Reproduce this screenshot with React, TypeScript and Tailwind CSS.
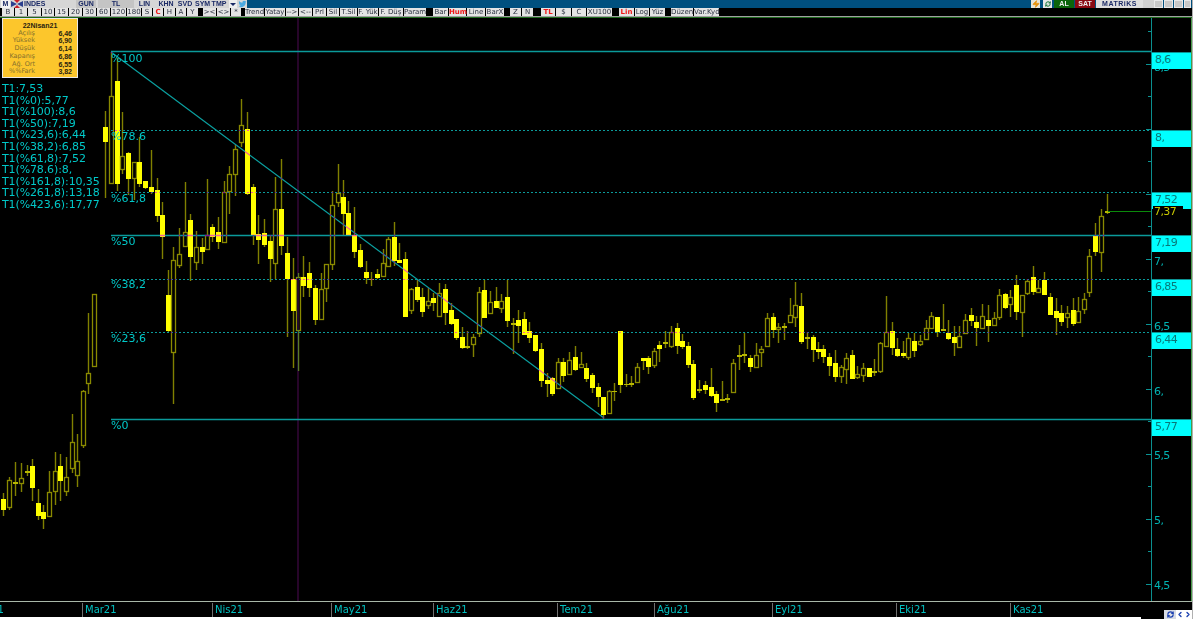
import { FaTwitter } from 'react-icons/fa'
import { Zap, ChevronLeft, ChevronRight, RefreshCw } from 'lucide-react'

// x, wick top, body top, body bottom, wick bottom, kind (0 hollow, 1 filled, 2 doji)
const candles: number[][] = [
  [3, 493, 499, 510, 516, 1], [9, 477, 480, 507, 510, 0], [15, 462, 482, 484, 496, 2], [21, 463, 478, 483, 492, 0],
  [27, 465, 471, 473, 476, 2], [32, 459, 466, 488, 501, 1], [38, 489, 503, 516, 520, 1], [43, 505, 512, 519, 529, 1],
  [49, 471, 492, 516, 517, 0], [55, 452, 471, 491, 505, 0], [60, 454, 466, 481, 501, 1], [66, 457, 477, 491, 496, 0],
  [72, 414, 442, 468, 473, 0], [77, 434, 461, 475, 487, 0], [83, 390, 391, 445, 448, 0], [88, 313, 373, 383, 394, 0],
  [94, 294, 294, 366, 367, 0], [105, 111, 127, 142, 198, 1], [111, 52, 96, 183, 183, 0], [117, 58, 81, 184, 191, 1],
  [122, 112, 156, 169, 174, 0], [128, 152, 153, 179, 195, 1], [134, 162, 162, 178, 200, 0], [139, 137, 162, 184, 187, 1],
  [145, 181, 181, 188, 189, 1], [151, 150, 187, 192, 194, 1], [157, 178, 190, 216, 222, 1], [162, 202, 215, 237, 259, 1],
  [168, 270, 295, 331, 332, 1], [173, 247, 260, 352, 404, 0], [179, 228, 254, 265, 268, 0], [185, 182, 232, 246, 247, 0],
  [190, 214, 220, 257, 281, 1], [196, 231, 247, 262, 270, 0], [202, 238, 247, 252, 264, 1], [207, 179, 235, 249, 250, 0],
  [212, 224, 227, 237, 242, 1], [218, 217, 232, 242, 249, 1], [224, 181, 192, 242, 243, 0], [229, 166, 174, 191, 214, 0],
  [235, 145, 149, 174, 196, 0], [241, 99, 125, 142, 147, 0], [247, 112, 129, 194, 195, 1], [253, 184, 187, 235, 245, 1],
  [258, 215, 234, 240, 264, 1], [264, 219, 233, 245, 247, 1], [270, 235, 241, 259, 282, 1], [275, 177, 209, 263, 279, 0],
  [281, 159, 209, 246, 255, 1], [287, 237, 253, 279, 337, 1], [293, 258, 279, 311, 368, 1], [298, 273, 277, 330, 371, 0],
  [303, 256, 277, 286, 297, 1], [309, 262, 273, 288, 297, 1], [315, 285, 288, 320, 325, 1], [321, 273, 289, 319, 320, 0],
  [326, 264, 264, 288, 302, 0], [332, 191, 205, 264, 270, 0], [338, 164, 193, 202, 207, 0], [343, 180, 197, 214, 235, 1],
  [348, 201, 213, 235, 235, 1], [354, 207, 235, 252, 258, 1], [360, 244, 250, 267, 268, 1], [366, 261, 272, 278, 284, 1],
  [371, 272, 279, 280, 286, 2], [377, 269, 274, 278, 279, 1], [383, 249, 263, 276, 276, 0], [388, 237, 239, 266, 267, 0],
  [394, 222, 237, 261, 266, 1], [399, 243, 260, 263, 263, 1], [405, 252, 259, 317, 317, 1], [411, 288, 289, 310, 314, 0],
  [417, 280, 287, 300, 302, 1], [422, 288, 297, 312, 317, 1], [428, 288, 301, 305, 309, 0], [433, 293, 298, 303, 311, 1],
  [439, 283, 293, 316, 317, 0], [445, 284, 289, 313, 325, 1], [451, 303, 310, 324, 325, 1], [456, 319, 319, 338, 340, 1],
  [462, 327, 337, 348, 349, 1], [467, 331, 346, 348, 349, 2], [473, 334, 337, 344, 357, 0], [479, 287, 292, 333, 337, 0],
  [484, 280, 290, 318, 318, 1], [490, 291, 302, 313, 314, 0], [496, 287, 301, 308, 308, 1], [501, 294, 301, 308, 313, 0],
  [507, 280, 297, 321, 327, 1], [513, 318, 323, 325, 354, 2], [518, 310, 320, 326, 343, 1], [524, 312, 319, 335, 335, 1],
  [529, 322, 331, 338, 343, 1], [535, 335, 335, 351, 352, 1], [541, 343, 349, 381, 387, 1], [547, 373, 380, 384, 397, 1],
  [552, 377, 378, 394, 396, 1], [558, 358, 362, 388, 389, 0], [563, 358, 362, 376, 382, 1], [569, 352, 360, 374, 375, 0],
  [575, 346, 357, 370, 371, 1], [581, 352, 364, 367, 368, 0], [586, 363, 368, 379, 382, 1], [592, 373, 375, 388, 393, 1],
  [598, 383, 387, 397, 407, 1], [603, 397, 397, 415, 419, 1], [609, 390, 391, 413, 413, 0], [614, 383, 391, 392, 401, 2],
  [620, 331, 331, 385, 393, 1], [626, 374, 384, 385, 387, 2], [631, 376, 383, 385, 387, 2], [637, 363, 367, 382, 383, 0],
  [643, 358, 358, 361, 370, 1], [648, 356, 358, 367, 374, 1], [654, 348, 351, 365, 368, 0], [659, 341, 345, 349, 362, 1],
  [665, 331, 342, 344, 348, 2], [671, 326, 332, 346, 348, 0], [677, 323, 328, 346, 354, 1], [682, 334, 341, 347, 349, 1],
  [688, 342, 346, 365, 368, 1], [693, 360, 364, 398, 400, 1], [699, 380, 389, 391, 393, 2], [705, 381, 385, 390, 394, 1],
  [711, 368, 387, 396, 397, 1], [716, 391, 394, 403, 412, 1], [722, 381, 399, 401, 401, 2], [727, 394, 398, 400, 403, 2],
  [733, 359, 363, 392, 393, 0], [739, 345, 355, 357, 370, 2], [744, 333, 354, 356, 363, 2], [750, 355, 358, 367, 372, 1],
  [756, 343, 355, 367, 368, 0], [761, 346, 349, 352, 367, 0], [767, 313, 318, 346, 346, 0], [773, 313, 317, 330, 338, 1],
  [778, 323, 327, 329, 343, 0], [784, 323, 326, 328, 340, 2], [790, 298, 315, 322, 322, 0], [795, 282, 305, 317, 327, 0],
  [801, 293, 306, 342, 344, 1], [807, 332, 337, 339, 349, 2], [813, 335, 337, 350, 362, 1], [818, 342, 349, 352, 359, 1],
  [823, 345, 349, 357, 363, 1], [829, 353, 357, 366, 376, 1], [835, 350, 363, 377, 382, 1], [841, 365, 367, 376, 383, 0],
  [846, 353, 358, 369, 384, 0], [852, 350, 355, 379, 379, 1], [857, 366, 374, 377, 379, 0], [863, 363, 368, 375, 382, 0],
  [869, 368, 368, 377, 377, 1], [874, 359, 371, 373, 376, 2], [880, 342, 343, 371, 373, 0], [886, 296, 332, 346, 346, 0],
  [892, 322, 331, 348, 355, 1], [897, 338, 349, 356, 357, 1], [903, 341, 353, 356, 358, 1], [908, 333, 338, 357, 360, 0],
  [914, 333, 341, 351, 357, 1], [920, 335, 341, 344, 346, 0], [926, 320, 328, 339, 340, 0], [931, 312, 316, 328, 329, 0],
  [937, 317, 317, 332, 337, 1], [943, 304, 329, 331, 331, 2], [948, 320, 333, 339, 340, 1], [954, 326, 337, 343, 356, 1],
  [959, 326, 336, 347, 347, 0], [965, 314, 320, 333, 334, 0], [971, 308, 315, 321, 326, 1], [976, 316, 322, 328, 346, 1],
  [982, 304, 316, 328, 328, 0], [988, 305, 320, 326, 342, 1], [994, 312, 318, 325, 325, 0], [999, 289, 295, 317, 320, 0],
  [1005, 293, 294, 308, 309, 1], [1010, 290, 297, 304, 317, 0], [1016, 275, 285, 312, 320, 1], [1022, 295, 295, 312, 337, 0],
  [1027, 279, 281, 293, 295, 0], [1033, 266, 277, 292, 295, 1], [1038, 280, 288, 292, 292, 0], [1044, 272, 280, 295, 295, 1],
  [1050, 293, 297, 315, 315, 1], [1056, 298, 311, 318, 335, 1], [1061, 305, 313, 322, 326, 1], [1067, 306, 313, 317, 328, 0],
  [1073, 298, 310, 324, 326, 1], [1078, 297, 311, 322, 322, 0], [1084, 293, 299, 309, 314, 0], [1089, 249, 256, 292, 297, 0],
  [1095, 223, 236, 252, 256, 1], [1101, 209, 216, 252, 272, 0], [1107, 194, 211, 213, 214, 2],
]

const fibLines = [
  { y: 51.5, dash: '', w: 1.6 },
  { y: 130.5, dash: '2 2', w: 1 },
  { y: 192.5, dash: '2 2', w: 1 },
  { y: 235.5, dash: '', w: 1.6 },
  { y: 279.5, dash: '2 2', w: 1 },
  { y: 332.5, dash: '2 2', w: 1 },
  { y: 419.5, dash: '', w: 1.6 },
]

const axisTicks = [31.5, 64.5, 96.5, 129.5, 161.5, 194.5, 226.5, 259.5, 291.5, 324.5, 356.5, 389.5, 421.5, 454.5, 486.5, 519.5, 551.5, 584.5]

const fibLabels = [
  { text: '%100', cls: 'top-[34px]' },
  { text: '%78.6', cls: 'top-[112px]' },
  { text: '%61,8', cls: 'top-[174px]' },
  { text: '%50', cls: 'top-[217px]' },
  { text: '%38,2', cls: 'top-[260px]' },
  { text: '%23,6', cls: 'top-[314px]' },
  { text: '%0', cls: 'top-[401px]' },
]

const legend = [
  'T1:7,53', 'T1(%0):5,77', 'T1(%100):8,6', 'T1(%50):7,19', 'T1(%23,6):6,44', 'T1(%38,2):6,85',
  'T1(%61,8):7,52', 'T1(%78.6):8,', 'T1(%161,8):10,35', 'T1(%261,8):13,18', 'T1(%423,6):17,77',
]

const info = [
  ['Açılış', '6,46'], ['Yüksek', '6,90'], ['Düşük', '6,14'], ['Kapanış', '6,86'], ['Ağ. Ort', '6,55'], ['%%Fark', '3,82'],
]

const badges = [
  { text: '8,6', cls: 'top-[34px]' },
  { text: '8,', cls: 'top-[112px]' },
  { text: '7,52', cls: 'top-[174px]' },
  { text: '7,19', cls: 'top-[217px]' },
  { text: '6,85', cls: 'top-[261px]' },
  { text: '6,44', cls: 'top-[314px]' },
  { text: '5,77', cls: 'top-[401px]' },
]

const plainPrices = [
  { text: '8,5', cls: 'top-[43px]' },
  { text: '7,', cls: 'top-[237px]' },
  { text: '6,5', cls: 'top-[302px]' },
  { text: '6,', cls: 'top-[367px]' },
  { text: '5,5', cls: 'top-[431px]' },
  { text: '5,', cls: 'top-[496px]' },
  { text: '4,5', cls: 'top-[561px]' },
]

const months = [
  { text: 'Şub21', cls: 'left-[-31px]' },
  { text: 'Mar21', cls: 'left-[82px]' },
  { text: 'Nis21', cls: 'left-[212px]' },
  { text: 'May21', cls: 'left-[331px]' },
  { text: 'Haz21', cls: 'left-[433px]' },
  { text: 'Tem21', cls: 'left-[557px]' },
  { text: 'Ağu21', cls: 'left-[654px]' },
  { text: 'Eyl21', cls: 'left-[772px]' },
  { text: 'Eki21', cls: 'left-[896px]' },
  { text: 'Kas21', cls: 'left-[1010px]' },
]

type Btn = { t?: string; w: string; red?: boolean }

const toolbar: Btn[] = [
  { t: 'B', w: 'w-[12px]' }, { t: '1', w: 'w-[12px]' }, { t: '5', w: 'w-[13px]' }, { t: '10', w: 'w-[12px]' },
  { t: '15', w: 'w-[13px]' }, { t: '20', w: 'w-[13px]' }, { t: '30', w: 'w-[13px]' }, { t: '60', w: 'w-[13px]' },
  { t: '120', w: 'w-[15px]' }, { t: '180', w: 'w-[14px]' }, { t: 'S', w: 'w-[10px]' }, { t: 'C', w: 'w-[10px]', red: true },
  { t: 'H', w: 'w-[11px]' }, { t: 'A', w: 'w-[10px]' }, { t: 'Y', w: 'w-[11px]' }, { w: 'w-[3px]' },
  { t: '><', w: 'w-[13px]' }, { t: '<>', w: 'w-[13px]' }, { t: '*', w: 'w-[10px]' }, { w: 'w-[2px]' },
  { t: 'Trend', w: 'w-[19px]' }, { t: 'Yatay', w: 'w-[20px]' }, { t: '-->', w: 'w-[12px]' }, { t: '<--', w: 'w-[13px]' },
  { t: 'Prl', w: 'w-[13px]' }, { t: 'Sil', w: 'w-[12px]' }, { t: 'T.Sil', w: 'w-[17px]' }, { t: 'F. Yük', w: 'w-[20px]' },
  { t: 'F. Düş', w: 'w-[24px]' }, { t: 'Param', w: 'w-[22px]' }, { w: 'w-[5px]' },
  { t: 'Bar', w: 'w-[15px]' }, { t: 'Hum', w: 'w-[17px]', red: true }, { t: 'Line', w: 'w-[18px]' }, { t: 'BarX', w: 'w-[18px]' }, { w: 'w-[4px]' },
  { t: 'Z', w: 'w-[11px]' }, { t: 'N', w: 'w-[11px]' }, { w: 'w-[6px]' },
  { t: 'TL', w: 'w-[14px]', red: true }, { t: '$', w: 'w-[15px]' }, { t: 'C', w: 'w-[14px]' }, { t: 'XU100', w: 'w-[25px]' }, { w: 'w-[5px]' },
  { t: 'Lin', w: 'w-[15px]', red: true }, { t: 'Log', w: 'w-[14px]' }, { t: 'Yüz', w: 'w-[15px]' }, { w: 'w-[4px]' },
  { t: 'Düzen', w: 'w-[22px]' }, { t: 'Var.Kyd', w: 'w-[25px]' },
]

function Candle({ c }: { c: number[] }) {
  const [x, wt, bt, bb, wb, kind] = c
  return (
    <g>
      <line x1={x + 0.5} x2={x + 0.5} y1={wt} y2={wb} stroke="#808000" strokeWidth={1.4} />
      {kind === 0 && <rect x={x - 1.5} y={bt + 0.5} width={4} height={bb - bt} fill="#000" stroke="#8a8a00" strokeWidth={1.3} />}
      {kind === 1 && <rect x={x - 2} y={bt} width={5} height={bb - bt} fill="#ffff00" />}
      {kind === 2 && <rect x={x - 2} y={bt} width={5} height={Math.max(bb - bt, 1)} fill="#b8b800" />}
    </g>
  )
}

function TopBar() {
  return (
    <div className="flex h-[8px] bg-[#00507f] overflow-hidden font-['Liberation_Sans',sans-serif] text-[7px] font-bold leading-[8px] text-[#1b2a66]">
      <div className="flex items-center w-[247px] bg-[#d6d6d6]">
        <span className="w-[9px] ml-[1px] bg-[#f2f2f2] text-center">M</span>
        <svg viewBox="0 0 12 8" className="w-[12px] h-[8px] ml-[1px]">
          <path d="M0 1 L6 4 L12 1 V7 L6 4 L0 7 Z" fill="#2b3f8f" />
          <path d="M3 0 L6 3 L9 0 Z" fill="#c8202a" />
          <path d="M3 8 L6 5 L9 8 Z" fill="#c8202a" />
        </svg>
        <span className="w-[52px] ml-[1px]">INDES</span>
        <span className="w-[20px] bg-[#c4c4c4] text-center">GUN</span>
        <span className="w-[36px] ml-[2px] bg-[#c4c4c4] text-center">TL</span>
        <span className="w-[19px] ml-[1px] text-center">LIN</span>
        <span className="w-[18px] ml-[3px] text-center">KHN</span>
        <span className="w-[16px] ml-[2px] text-center">SVD</span>
        <span className="w-[15px] ml-[2px] text-center">SYM</span>
        <span className="w-[16px] ml-[1px] text-center">TMP</span>
        <svg viewBox="0 0 8 8" className="w-[8px] h-[8px] ml-[2px] bg-[#eeeeee]">
          <path d="M1 3 H7 L4 6 Z" fill="#1b2a66" />
        </svg>
        <FaTwitter className="w-[9px] h-[8px] ml-[1px] text-[#4aa8e0]" />
      </div>
      <div className="flex items-center ml-auto mr-[1px]">
        <span className="flex justify-center w-[9px] h-[8px] bg-[#e8e4d8]">
          <Zap className="w-[8px] h-[8px] text-[#e8920c] fill-[#e8920c]" />
        </span>
        <span className="flex justify-center items-center w-[9px] h-[8px] ml-[3px] bg-[#e8e8e8]">
          <RefreshCw className="w-[6px] h-[6px] text-[#1a7a3a]" strokeWidth={4} />
        </span>
        <span className="w-[20px] ml-[2px] bg-[#0b640b] text-center text-[#f0f0f0]">AL</span>
        <span className="w-[20px] ml-[1px] bg-[#8a0a12] text-center text-[#f0f0f0]">SAT</span>
        <span className="w-[47px] ml-[1px] bg-[#dedede] text-center tracking-[0.5px]">MATRiKS</span>
        <span className="w-[11px] h-[8px] bg-[#d0d0d0]" />
        <span className="w-[9px] h-[8px] bg-[#c8c8c8] border border-[#e8e8e8]" />
        <span className="w-[9px] h-[8px] ml-[1px] bg-[#c8c8c8] border border-[#e8e8e8]" />
        <span className="w-[9px] h-[8px] ml-[1px] bg-[#c8c8c8] border border-[#e8e8e8]" />
        <span className="w-[7px] h-[8px] ml-[1px] bg-[#c8c8c8] border border-[#e8e8e8]" />
      </div>
    </div>
  )
}

function Toolbar() {
  return (
    <div className="flex gap-px h-[8px] pl-[2px] bg-black overflow-hidden font-['DejaVu_Sans',sans-serif] text-[7px] leading-[8px] whitespace-nowrap">
      {toolbar.map((b, i) =>
        b.t ? (
          <span key={i} className={`${b.w} shrink-0 text-center bg-[#e4e4e4] ${b.red ? 'text-[#f01818] font-bold' : 'text-[#2a3040]'}`}>
            {b.t}
          </span>
        ) : (
          <span key={i} className={`${b.w} shrink-0`} />
        ),
      )}
    </div>
  )
}

function InfoPanel() {
  return (
    <div className="absolute left-[2px] top-[0px] w-[76px] h-[60px] px-[5px] pt-[3px] bg-[#fcc62c] border border-[#e8e8e8] font-['Liberation_Sans',sans-serif] text-[7px] leading-[7.7px]">
      <div className="text-center font-bold text-[#2a2410]">22Nisan21</div>
      {info.map(([label, value]) => (
        <div key={label} className="flex">
          <span className="w-[27px] text-right text-[#84702c] font-['DejaVu_Sans',sans-serif] text-[6.5px]">{label}</span>
          <span className="ml-auto font-bold text-[#2a2410]">{value}</span>
        </div>
      ))}
    </div>
  )
}

function Chart() {
  return (
    <div className="relative w-[1152px] h-[583px] font-['DejaVu_Sans',sans-serif] text-[11px] text-[#00c8c8]">
      <svg viewBox="0 18 1152 583" className="absolute inset-0 w-[1152px] h-[583px]">
        {candles.map(c => (
          <Candle key={c[0]} c={c} />
        ))}
        <g className="mix-blend-difference">
          <line x1={298} x2={298} y1={18} y2={601} stroke="#38083c" strokeWidth={1.4} />
          {fibLines.map(l => (
            <line key={l.y} x1={111} x2={1152} y1={l.y} y2={l.y} stroke="#0b9a9a" strokeWidth={l.w} strokeDasharray={l.dash} />
          ))}
          <line x1={111} y1={52} x2={604} y2={418} stroke="#0ba0a0" strokeWidth={1.2} />
        </g>
        <line x1={1108} x2={1152} y1={211.5} y2={211.5} stroke="#0a8a0a" />
      </svg>
      <div className="absolute left-[2px] top-[65px] leading-[11.6px] tracking-[-0.12px] whitespace-nowrap">
        {legend.map(t => (
          <div key={t}>{t}</div>
        ))}
      </div>
      {fibLabels.map(l => (
        <span key={l.text} className={`absolute left-[111px] leading-[13px] ${l.cls}`}>
          {l.text}
        </span>
      ))}
      <InfoPanel />
    </div>
  )
}

function PriceAxis() {
  return (
    <div className="relative w-[40px] h-[583px] border-l border-[#0b8f8f] font-['DejaVu_Sans',sans-serif] text-[11px] tracking-[-0.6px] leading-[13px]">
      <svg viewBox="0 18 6 583" className="absolute left-[-7px] top-0 w-[6px] h-[583px]">
        {axisTicks.map((y, i) => (
          <line key={y} x1={i % 2 === 0 ? 3 : 1} x2={6} y1={y} y2={y} stroke="#0b9494" />
        ))}
      </svg>
      {plainPrices.map(p => (
        <span key={p.text} className={`absolute left-[2px] text-[#00b4b4] ${p.cls}`}>
          {p.text}
        </span>
      ))}
      {badges.map(b => (
        <div key={b.text} className={`absolute left-0 w-[39px] h-[17px] pl-[3px] bg-[#00ffff] border-t border-[#0b9494] text-[#087878] ${b.cls}`}>
          {b.text}
        </div>
      ))}
      <div className="absolute left-[1px] top-[188px] w-[30px] h-[11px] pl-[1px] bg-black text-[#c8c800] leading-[11px]">7,37</div>
    </div>
  )
}

function TimeAxis() {
  return (
    <div className="relative h-[18px] bg-black border-t border-[#a8b8a8] font-['DejaVu_Sans',sans-serif] text-[10px] leading-[14px] text-[#00c0c0]">
      {months.map(m => (
        <span key={m.text} className={`absolute top-[1px] pl-[2px] border-l border-[#707070] ${m.cls}`}>
          {m.text}
        </span>
      ))}
      <div className="absolute left-0 bottom-0 w-[1141px] h-[2px] bg-white" />
      <div className="absolute right-0 bottom-0 flex items-center h-[9px]">
        <span className="flex items-center justify-center w-[12px] h-[9px] bg-[#d8dce4]">
          <RefreshCw className="w-[7px] h-[7px] text-[#1a3fb0]" strokeWidth={4} />
        </span>
        <ChevronLeft className="w-[8px] h-[9px] bg-white text-[#1a3fb0]" strokeWidth={4} />
        <ChevronRight className="w-[8px] h-[9px] bg-white text-[#1a3fb0]" strokeWidth={4} />
      </div>
    </div>
  )
}

export default function App() {
  return (
    <div className="w-[1200px] h-[619px] bg-white overflow-hidden">
      <div className="flex flex-col w-[1193px] h-[619px] bg-black border-r border-[#b0b0b0]">
        <TopBar />
        <Toolbar />
        <div className="h-[1px] bg-[#a0a0a0]" />
        <div className="flex w-[1192px] border-t border-[#1f6a1f]">
          <Chart />
          <PriceAxis />
          <div className="w-px bg-[#4a9a4a]" />
        </div>
        <TimeAxis />
      </div>
    </div>
  )
}
